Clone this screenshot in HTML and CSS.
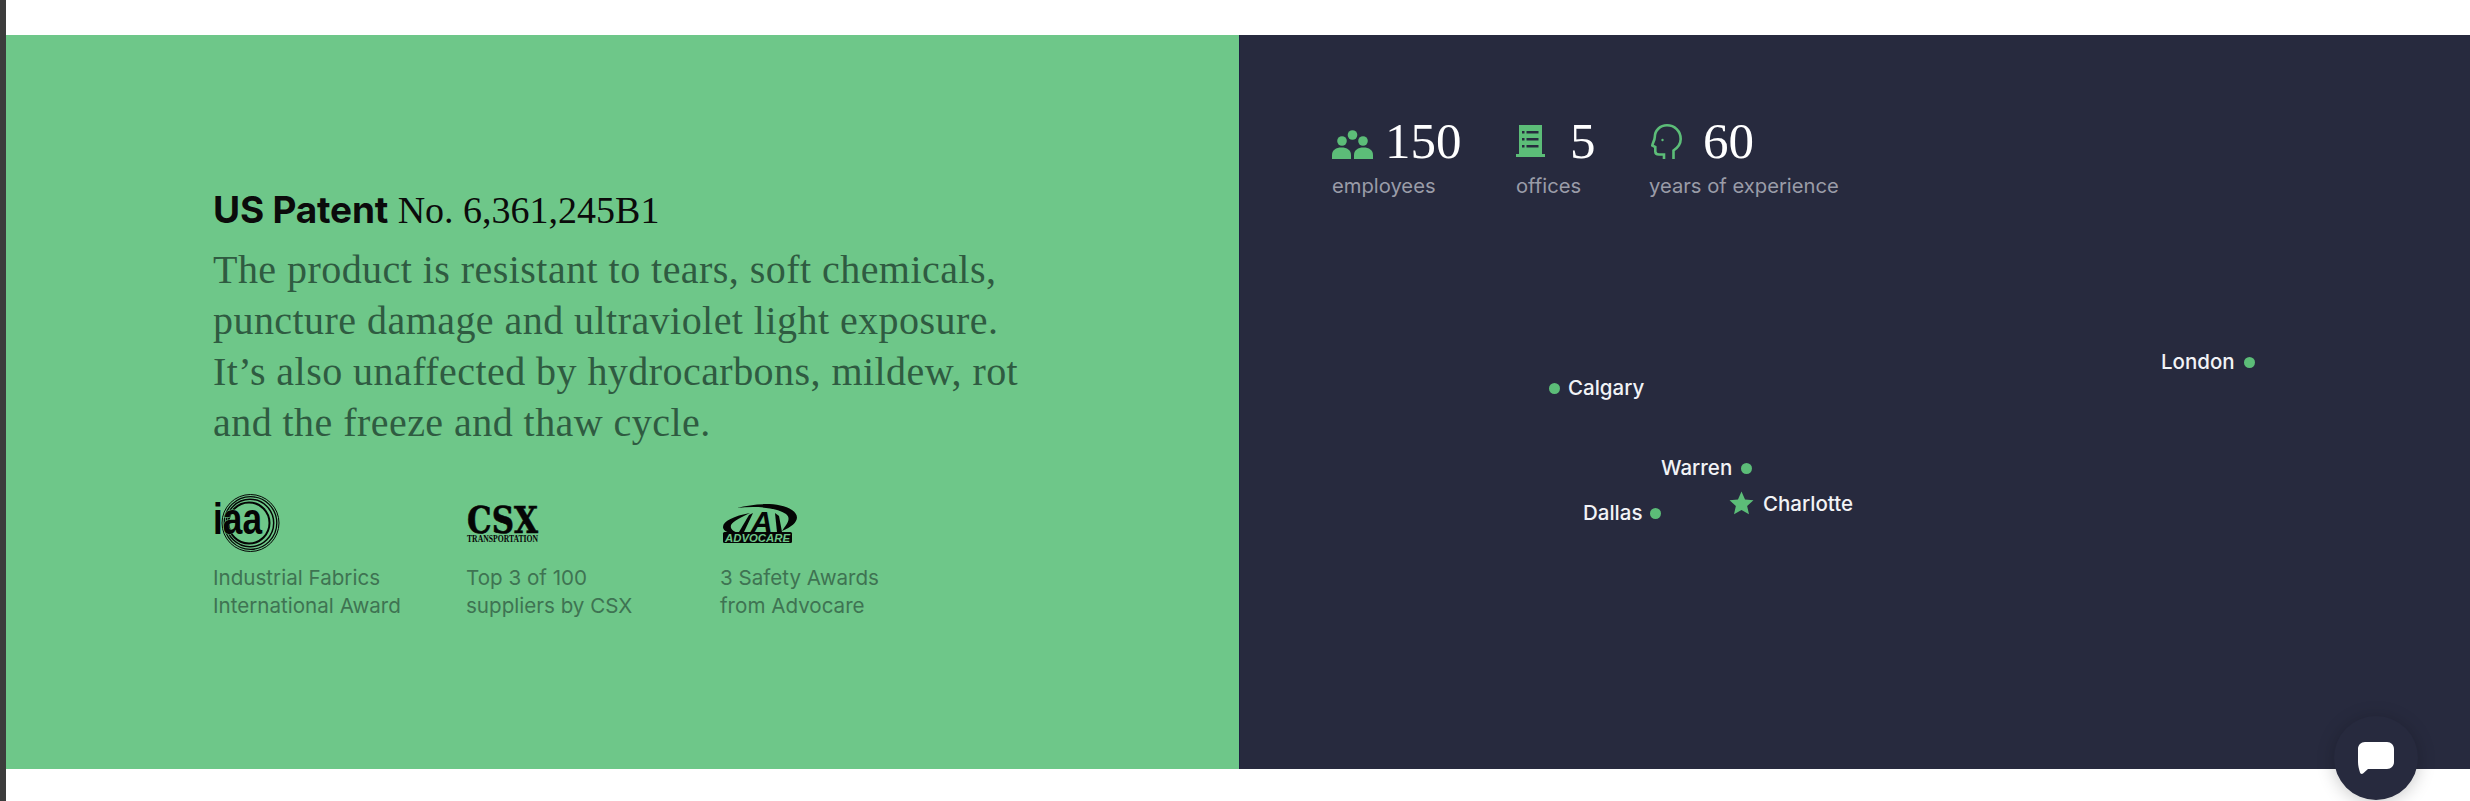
FILE: index.html
```html
<!DOCTYPE html>
<html lang="en">
<head>
<meta charset="utf-8">
<title>US Patent</title>
<link rel="stylesheet" href="styles.css">
</head>
<body>
<main class="page">
  <section class="split">
    <div class="panel-green">
      <h2 class="patent"><strong>US Patent</strong> <span>No. 6,361,245B1</span></h2>
      <p class="lead">The product is resistant to tears, soft chemicals,<br>puncture damage and ultraviolet light exposure.<br>It’s also unaffected by hydrocarbons, mildew, rot<br>and the freeze and thaw cycle.</p>
      <div class="awards">
        <div class="award">
          <svg class="logo" width="70" height="60" viewBox="0 0 70 60">
            <g fill="none" stroke="#050505">
              <circle cx="37.500" cy="30" r="28.500" stroke-width="1"/>
              <circle cx="37.500" cy="30" r="26.300" stroke-width="1.300"/>
              <circle cx="37" cy="30" r="23.700" stroke-width="1.500"/>
              <circle cx="36" cy="30" r="20.500" stroke-width="2"/>
            </g>
            <text class="logo-iaa" x="0" y="41" textLength="49" lengthAdjust="spacingAndGlyphs">iaa</text>
          </svg>
          <p>Industrial Fabrics<br>International Award</p>
        </div>
        <div class="award">
          <svg class="logo" width="74" height="60" viewBox="0 0 74 60">
            <text class="logo-csx" x="1" y="40" textLength="71" lengthAdjust="spacingAndGlyphs">CSX</text>
            <text class="logo-csx-sub" x="1" y="49" textLength="71" lengthAdjust="spacingAndGlyphs">TRANSPORTATION</text>
          </svg>
          <p>Top 3 of 100<br>suppliers by CSX</p>
        </div>
        <div class="award">
          <svg class="logo" width="80" height="60" viewBox="0 0 80 60" fill="#050505">
            <path d="M17 15C35 10 60 9 72 17 82 24 76 32 62 38 66 32 72 26 66 21 56 14 35 13 17 15Z"/>
            <path d="M30 20C14 23 3 28 3 34 3 37 6 39 11 40H18C13 38 10 36 11 32 13 28 22 24 30 20Z"/>
            <path d="M29 22 33 20 24 39H19Z"/>
            <path d="M55 20 59 23 62 39H57Z"/>
            <text class="logo-a" x="31" y="39">A</text>
            <rect x="3" y="39" width="69" height="11" rx="1.500"/>
            <text class="logo-adv" x="5" y="48.500" textLength="65" lengthAdjust="spacingAndGlyphs">ADVOCARE</text>
          </svg>
          <p>3 Safety Awards<br>from Advocare</p>
        </div>
      </div>
    </div>
    <div class="panel-dark">
      <div class="stats">
        <div class="stat">
          <div class="stat-head">
            <svg class="stat-icon icon-people" width="41" height="29" viewBox="0 0 41 29" fill="#5cbd78">
              <circle cx="20.500" cy="5" r="4.800"/>
              <circle cx="10" cy="11" r="4.800"/>
              <circle cx="31" cy="11" r="4.800"/>
              <path d="M0 29v-4c0-5 4-7.500 9.500-7.500s9.500 2.500 9.500 7.500v4Z"/>
              <path d="M22 29v-4c0-5 4-7.500 9.500-7.500S41 20 41 25v4Z"/>
            </svg>
            <span class="num">150</span>
          </div>
          <div class="stat-label">employees</div>
        </div>
        <div class="stat">
          <div class="stat-head">
            <svg class="stat-icon icon-building" width="29" height="32" viewBox="0 0 29 32" fill="#5cbd78">
              <path d="M3 0h23v29h3v3H0v-3h3Z"/>
              <g fill="#272a3e">
                <rect x="6" y="6" width="2.500" height="2.500"/><rect x="10.500" y="6" width="12" height="2.500"/>
                <rect x="6" y="13" width="2.500" height="2.500"/><rect x="10.500" y="13" width="12" height="2.500"/>
                <rect x="6" y="20" width="2.500" height="2.500"/><rect x="10.500" y="20" width="12" height="2.500"/>
              </g>
            </svg>
            <span class="num">5</span>
          </div>
          <div class="stat-label">offices</div>
        </div>
        <div class="stat">
          <div class="stat-head">
            <svg class="stat-icon icon-head" width="31" height="35" viewBox="0 0 31 35" fill="none" stroke="#5cbd78" stroke-width="2.600">
              <path d="M22.500 35V26.500C27 23.500 29.700 19.500 29.700 15 29.700 7 23.500 1.300 16 1.300 9 1.300 3.800 6.500 3.800 13 3.800 16 1.300 20 1.300 21.500L4.300 23V27.500C4.300 29.500 6 30.500 8 30.500H13V35"/>
              <circle cx="11.500" cy="16" r="1.200" fill="#5cbd78" stroke="none"/>
            </svg>
            <span class="num">60</span>
          </div>
          <div class="stat-label">years of experience</div>
        </div>
      </div>
      <div class="map">
        <div class="pin pin-calgary"><i class="dot"></i><span>Calgary</span></div>
        <div class="pin pin-warren"><span>Warren</span><i class="dot"></i></div>
        <div class="pin pin-dallas"><span>Dallas</span><i class="dot"></i></div>
        <div class="pin pin-london"><span>London</span><i class="dot"></i></div>
        <div class="pin pin-charlotte">
          <svg width="25" height="25" viewBox="0 0 24 24" fill="#5cbd78"><path d="M12 .5l3.400 7.600 8.100.8-6.100 5.400 1.800 8.100L12 18.200l-7.200 4.200 1.800-8.100L.5 8.900l8.100-.8Z"/></svg>
          <span class="pin-text-low">Charlotte</span>
        </div>
      </div>
    </div>
  </section>
</main>
<button class="chat" aria-label="Chat">
  <svg width="36" height="32" viewBox="0 0 36 32" fill="#fff"><path d="M7 0H29C33 0 36 3 36 7V20C36 24 33 27 29 27H10L5 31.500C4 32.300 2.500 32 2 30.500 1 27 0 24 0 20V7C0 3 3 0 7 0Z"/></svg>
</button>
</body>
</html>
```
FILE: styles.css
```css
* { box-sizing: border-box; }
html, body { margin: 0; height: 100%; overflow: hidden; background: #fff; }
body { font-family: "Inter", "Liberation Sans", sans-serif; }
.page { height: 801px; border-left: 6px solid #3c3c3c; padding: 35px 0 32px; }
.split { display: flex; height: 734px; }
.panel-green { width: 1233px; background: #6ec789; padding: 153px 0 0 207px; flex: none; }
.panel-dark { flex: 1; background: #272a3e; padding: 76px 0 0 92px; position: relative; border-left: 1px solid #1d2040; }
.patent { margin: 0; font-size: 34px; line-height: 44px; font-weight: 400; color: #0b0b0b; white-space: nowrap; }
.patent strong { font-family: "Inter", sans-serif; font-weight: 700; font-size: 37px; letter-spacing: -0.2px; }
.patent span { font-family: "Liberation Serif", serif; font-size: 38px; }
.lead { margin: 11px 0 0; font-family: "Liberation Serif", serif; font-size: 40px; letter-spacing: .45px; line-height: 51px; color: #2f5b41; white-space: nowrap; }
.awards { display: grid; grid-template-columns: 253px 254px 1fr; margin-top: 45px; }
.logo { display: block; margin-bottom: 11px; overflow: visible; }
.award p { margin: 0; font-size: 20.600px; line-height: 28px; color: #3e7352; }
.logo-iaa { font-family: "Liberation Sans", sans-serif; font-weight: 700; font-size: 44px; fill: #050505; stroke: #6ec789; stroke-width: .8px; paint-order: stroke; }
.logo-csx { font-family: "DejaVu Serif", serif; font-weight: 700; font-size: 37px; fill: #050505; stroke: #050505; stroke-width: .6px; }
.logo-csx-sub { font-family: "Liberation Serif", serif; font-weight: 700; font-size: 10px; fill: #050505; }
.logo-a { font-family: "Liberation Sans", sans-serif; font-weight: 700; font-style: italic; font-size: 30px; fill: #050505; }
.logo-adv { font-family: "Liberation Sans", sans-serif; font-weight: 700; font-style: italic; font-size: 10.500px; fill: #6ec789; }
.stats { display: grid; grid-template-columns: 184px 133px auto; }
.stat-head { display: flex; align-items: center; height: 60px; }
.stat-icon { flex: none; }
.icon-people { margin: 6px 12px 0 0; }
.icon-building { margin-right: 25px; }
.icon-head { margin: 0 21px 0 2px; }
.num { font-family: "Liberation Serif", serif; font-size: 51px; line-height: 60px; color: #fff; }
.stat-label { margin-top: 1px; font-size: 20.200px; line-height: 28px; color: #9a9ca8; }
.map { position: absolute; inset: 0; pointer-events: none; }
.pin { position: absolute; display: flex; align-items: center; font-size: 20.500px; line-height: 28px; font-weight: 500; color: #f2f3f6; white-space: nowrap; }
.pin-text-low { margin-top: 1px; }
.dot { width: 11px; height: 11px; border-radius: 50%; background: #5cbd78; flex: none; }
.pin-calgary { left: 309px; top: 339px; gap: 8px; }
.pin-warren { left: 421px; top: 419px; gap: 9px; }
.pin-dallas { left: 343px; top: 464px; gap: 8px; }
.pin-london { left: 921px; top: 313px; gap: 9px; }
.pin-charlotte { left: 489px; top: 454px; gap: 9px; }
.chat { position: fixed; right: 52px; bottom: 1px; width: 84px; height: 84px; border: 0; border-radius: 50%; background: #272a3e; box-shadow: 0 2px 18px rgba(0,0,0,.22); display: flex; align-items: center; justify-content: center; padding: 0; }
```
